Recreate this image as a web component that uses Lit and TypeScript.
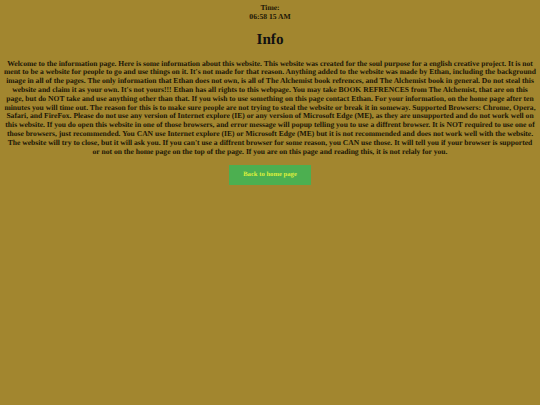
import { LitElement, html, css } from "lit";
import { customElement } from "lit/decorators.js";

@customElement("app-root")
export class AppRoot extends LitElement {
  static styles = css`
    :host {
      display: block;
      min-height: 405px;
      background: #a2862f;
      color: #1a1505;
      font-family: "Liberation Serif", "Times New Roman", serif;
      font-weight: bold;
      text-align: center;
      font-size: 7.58px;
      line-height: 8.8px;
      text-rendering: geometricPrecision;
    }
    .page {
      display: flex;
      flex-direction: column;
      align-items: center;
      padding: 4px 3.05px 0;
    }
    h1 {
      margin: 9px 0 0;
      font-size: 15.2px;
      line-height: 18px;
      color: #111;
    }
    p { margin: 11px 0 0; }
    a {
      display: block;
      margin-top: 9px;
      width: 82px;
      height: 20px;
      line-height: 20px;
      background: #4caf50;
      color: #dcf03c;
      text-decoration: none;
      font-size: 6.65px;
    }
  `;

  render() {
    return html`<div class="page">
      <div>Time:<br />06:58 15 AM</div>
      <h1>Info</h1>
      <p>
        Welcome to the information page. Here is some information about this website. This website was created for the soul purpose for a english creative project. It is not ment to be a website for people to go and use things on it. It's not made for that reason. Anything added to the website was made by Ethan, including the background image in all of the pages. The only information that Ethan does not own, is all of The Alchemist book refrences, and The Alchemist book in general. Do not steal this website and claim it as your own. It's not yours!!! Ethan has all rights to this webpage. You may take BOOK REFRENCES from The Alchemist, that are on this page, but do NOT take and use anything other than that. If you wish to use something on this page contact Ethan. For your information, on the home page after ten minutes you will time out. The reason for this is to make sure people are not trying to steal the website or break it in someway. Supported Browsers: Chrome, Opera, Safari, and FireFox. Please do not use any version of Internet explore (IE) or any version of Microsoft Edge (ME), as they are unsupported and do not work well on this website. If you do open this website in one of those browsers, and error message will popup telling you to use a diffrent browser. It is NOT required to use one of those browsers, just recommended. You CAN use Internet explore (IE) or Microsoft Edge (ME) but it is not recommended and does not work well with the website. The website will try to close, but it will ask you. If you can't use a diffrent browser for some reason, you CAN use those. It will tell you if your browser is supported<br />or not on the home page on the top of the page. If you are on this page and reading this, it is not relaly for you.
      </p>
      <a href="#">Back to home page</a>
    </div>`;
  }
}
